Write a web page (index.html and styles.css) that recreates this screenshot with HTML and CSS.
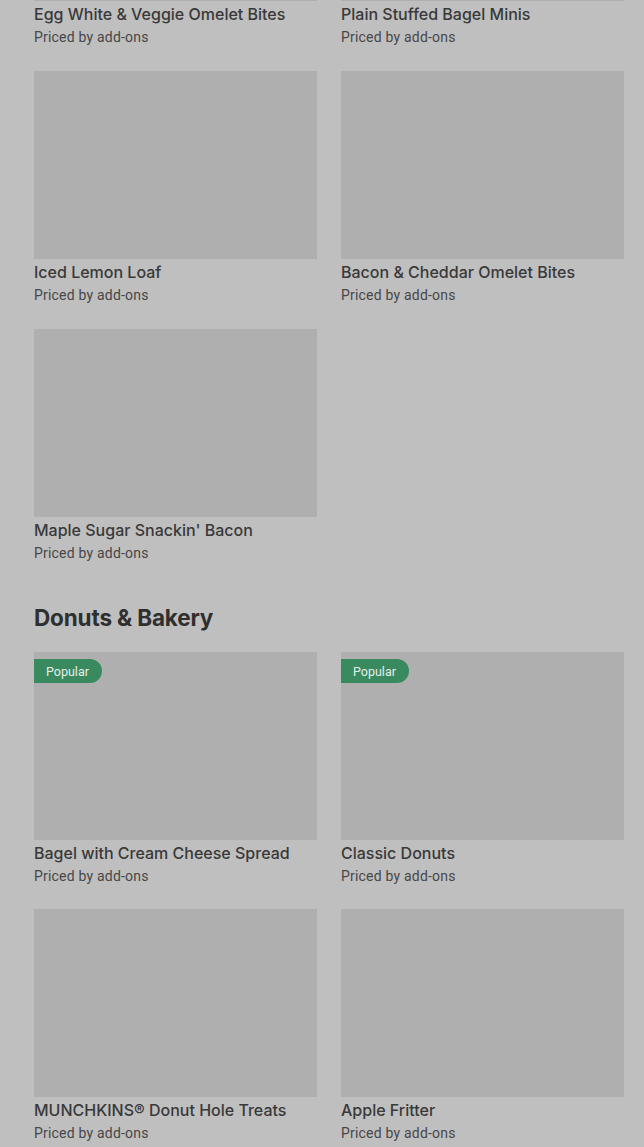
FILE: index.html
```html
<!DOCTYPE html>
<html lang="en">
<head>
<meta charset="utf-8">
<title>Menu</title>
<link rel="stylesheet" href="styles.css">
</head>
<body>
<main class="menu">
  <section class="section section-first">
    <div class="grid">
      <article class="card"><div class="thumb"></div><h3 class="name">Egg White &amp; Veggie Omelet Bites</h3><p class="price">Priced by add-ons</p></article>
      <article class="card"><div class="thumb"></div><h3 class="name">Plain Stuffed Bagel Minis</h3><p class="price">Priced by add-ons</p></article>
      <article class="card"><div class="thumb"></div><h3 class="name">Iced Lemon Loaf</h3><p class="price">Priced by add-ons</p></article>
      <article class="card"><div class="thumb"></div><h3 class="name">Bacon &amp; Cheddar Omelet Bites</h3><p class="price">Priced by add-ons</p></article>
      <article class="card"><div class="thumb"></div><h3 class="name">Maple Sugar Snackin' Bacon</h3><p class="price">Priced by add-ons</p></article>
    </div>
  </section>
  <section class="section">
    <h2 class="section-title">Donuts &amp; Bakery</h2>
    <div class="grid grid-tight">
      <article class="card"><div class="thumb"><span class="badge">Popular</span></div><h3 class="name">Bagel with Cream Cheese Spread</h3><p class="price">Priced by add-ons</p></article>
      <article class="card"><div class="thumb"><span class="badge">Popular</span></div><h3 class="name">Classic Donuts</h3><p class="price">Priced by add-ons</p></article>
      <article class="card"><div class="thumb"></div><h3 class="name">MUNCHKINS® Donut Hole Treats</h3><p class="price">Priced by add-ons</p></article>
      <article class="card"><div class="thumb"></div><h3 class="name">Apple Fritter</h3><p class="price">Priced by add-ons</p></article>
    </div>
  </section>
</main>
</body>
</html>
```
FILE: styles.css
```css
* { box-sizing: border-box; }
html, body {
  margin: 0;
  padding: 0;
  background: #bfbfbf;
  height: 100%;
  overflow: hidden;
}
body {
  font-family: Inter, "Noto Sans", sans-serif;
  color: #363636;
}
.menu {
  padding: 0 20px 0 34px;
}
.section-first {
  margin-top: -187px;
}
.section + .section {
  margin-top: 41px;
}
.section-title {
  margin: 0 0 20px;
  font-size: 22.5px;
  line-height: 28px;
  font-weight: 700;
  letter-spacing: -0.15px;
  color: #2f2f2f;
}
.grid {
  display: grid;
  grid-template-columns: 283px 283px;
  column-gap: 24px;
  row-gap: 24px;
}
.grid-tight {
  row-gap: 23px;
}
.card {
  display: flex;
  flex-direction: column;
}
.thumb {
  position: relative;
  height: 188px;
  background: #afafaf;
}
.badge {
  position: absolute;
  left: 0;
  top: 7px;
  height: 24px;
  padding: 0 13px 0 12px;
  display: flex;
  align-items: center;
  background: #3a8a60;
  color: #e4eee8;
  font-family: Roboto, sans-serif;
  font-size: 12.5px;
  border-radius: 0 12px 12px 0;
}
.name {
  margin: 1px 0 0;
  font-size: 16px;
  line-height: 24px;
  font-weight: 500;
  color: #393939;
  letter-spacing: 0;
}
.price {
  margin: 0;
  padding-top: 1px;
  font-family: Roboto, sans-serif;
  font-size: 14px;
  line-height: 20px;
  letter-spacing: 0.2px;
  color: #474747;
}
```
